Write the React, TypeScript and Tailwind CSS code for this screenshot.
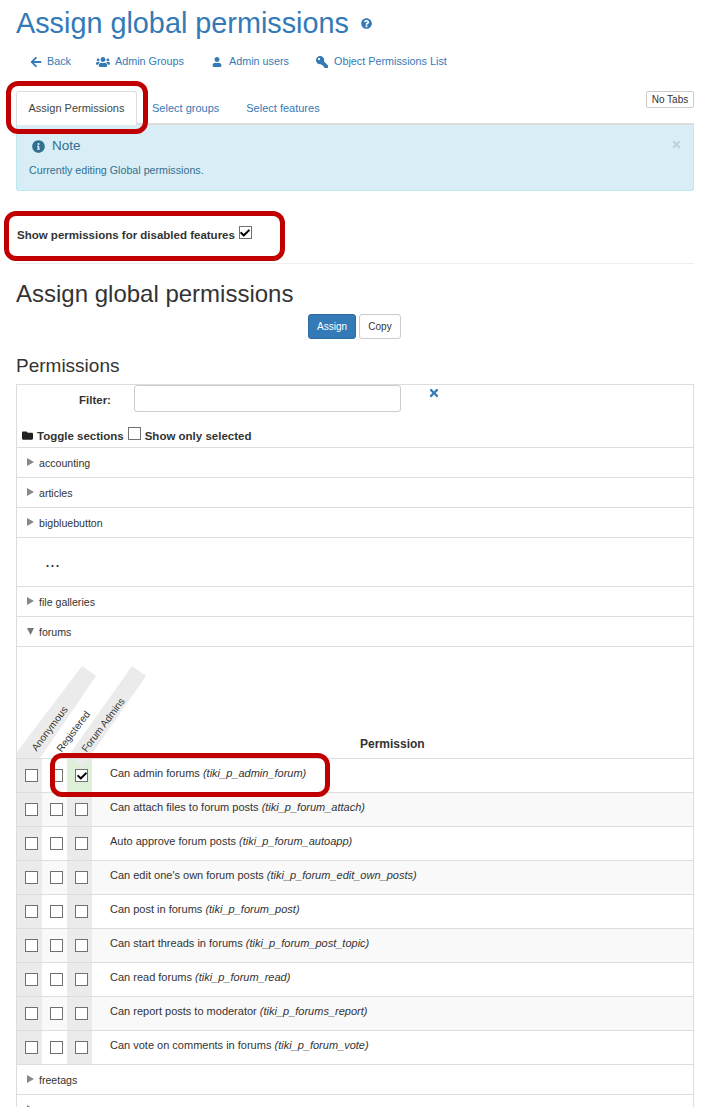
import React from 'react';
import { FaArrowLeft, FaCheck, FaFolder, FaInfoCircle, FaKey, FaQuestionCircle, FaTimes, FaUser, FaUsers } from 'react-icons/fa';

const forumPerms = [
  ['Can attach files to forum posts', 'tiki_p_forum_attach'],
  ['Auto approve forum posts', 'tiki_p_forum_autoapp'],
  ["Can edit one's own forum posts", 'tiki_p_forum_edit_own_posts'],
  ['Can post in forums', 'tiki_p_forum_post'],
  ['Can start threads in forums', 'tiki_p_forum_post_topic'],
  ['Can read forums', 'tiki_p_forum_read'],
  ['Can report posts to moderator', 'tiki_p_forums_report'],
  ['Can vote on comments in forums', 'tiki_p_forum_vote'],
];

function Box({ checked }: { checked?: boolean }) {
  return (
    <span className="flex h-[13px] w-[13px] shrink-0 items-center justify-center border border-[#707070] bg-white">
      {checked && <FaCheck className="text-[10px] text-black" />}
    </span>
  );
}

function Section({ name, open }: { name: string; open?: boolean }) {
  return (
    <div className="flex h-[30px] items-center border-b border-[#ddd] pl-[10px] pt-[2px]">
      <svg width="7" height="8" viewBox="0 0 7 8" className="mb-[3px] mr-[5px]">
        {open ? <path d="M0 1h7L3.5 8z" fill="#777" /> : <path d="M0 0l7 4-7 4z" fill="#888" />}
      </svg>
      <span className="text-[10.6px] text-[#333]">{name}</span>
    </div>
  );
}

function PermRow({ label, code, striped, first }: { label: string; code: string; striped?: boolean; first?: boolean }) {
  return (
    <div className={`flex h-[34px] border-b border-[#ddd] ${striped ? 'bg-[#f9f9f9]' : 'bg-white'}`}>
      <div className="flex w-[25px] items-center justify-center bg-[#ebebeb] pl-[4px]"><Box /></div>
      <div className="flex w-[25px] items-center justify-center pl-[4px]"><Box /></div>
      <div className={`relative flex w-[25px] items-center justify-center pl-[4px] ${first ? 'bg-[#dff0d8]' : 'bg-[#ebebeb]'}`}>
        {first && (
          <svg width="25" height="9" viewBox="0 0 25 9" className="absolute left-0 top-0">
            <path d="M7 0h18l-10 9z" fill="#ebebeb" />
          </svg>
        )}
        <span className="relative"><Box checked={first} /></span>
      </div>
      <div className="pl-[18px] pt-[7px] text-[11px] leading-[14px] text-[#333]">
        {label} <em>({code})</em>
      </div>
    </div>
  );
}

function NavLink({ icon, text, className }: { icon: React.ReactNode; text: string; className: string }) {
  return (
    <span className={`flex items-center text-[10.8px] text-[#337ab7] ${className}`}>
      {icon}
      <span>{text}</span>
    </span>
  );
}

export default function App() {
  return (
    <div className="relative h-[1120px] w-[706px] overflow-hidden bg-white font-['Liberation_Sans',Arial,sans-serif] text-[#333]">
      <div className="flex h-[47px] items-center pb-[1px] pl-[16px]">
        <h1 className="text-[28.8px] leading-[33px] text-[#337ab7]">Assign global permissions</h1>
        <FaQuestionCircle className="ml-[12px] text-[11px] text-[#337ab7]" />
      </div>

      <div className="flex h-[28px] items-center pl-[30px] pt-[1px]">
        <NavLink className="w-[66px]" icon={<FaArrowLeft className="mr-[5px] text-[12px]" />} text="Back" />
        <NavLink className="w-[116px]" icon={<FaUsers className="mr-[5px] text-[14px]" />} text="Admin Groups" />
        <NavLink className="w-[104px]" icon={<FaUser className="mr-[7px] text-[10px]" />} text="Admin users" />
        <NavLink className="" icon={<FaKey className="mr-[6px] -scale-x-100 text-[12px]" />} text="Object Permissions List" />
      </div>

      <div className="ml-[16px] mt-[16px] flex h-[34px] w-[678px] items-end border-b-2 border-[#ddd]">
        <div className="-mb-[2px] flex h-[34px] w-[121px] items-center justify-center rounded-t-[3px] border border-b-0 border-[#ddd] bg-white text-[11px] text-[#444]">
          Assign Permissions
        </div>
        <div className="ml-[15px] flex h-[32px] items-center pt-[2px] text-[11px] text-[#337ab7]">Select groups</div>
        <div className="ml-[27px] flex h-[32px] items-center pt-[2px] text-[11px] text-[#337ab7]">Select features</div>
        <div className="mb-[15px] ml-auto flex h-[17px] w-[48px] items-center justify-center rounded-[2px] border border-[#ccc] text-[10px] text-[#333]">
          No Tabs
        </div>
      </div>

      <div className="relative ml-[16px] h-[66px] w-[678px] rounded-b-[3px] border border-t-0 border-[#bce8f1] bg-[#d9edf7] text-[#31708f]">
        <div className="flex items-center pl-[15px] pt-[13px]">
          <FaInfoCircle className="mr-[7px] text-[13px]" />
          <span className="text-[13.5px] leading-[16px]">Note</span>
        </div>
        <div className="pl-[12px] pt-[9px] text-[10.7px] leading-[14px]">Currently editing Global permissions.</div>
        <FaTimes className="absolute right-[11px] top-[14px] text-[11px] text-[#b5d3e0]" />
      </div>

      <div className="ml-[17px] mt-[33px] flex h-[22px] items-center">
        <span className="pt-[2px] text-[11.5px] font-bold">Show permissions for disabled features</span>
        <span className="mb-[5px] ml-[4px]"><Box checked /></span>
      </div>
      <div className="ml-[16px] mt-[17px] w-[678px] border-t border-[#eee]" />

      <h2 className="ml-[16px] mt-[17px] text-[24px] leading-[26px]">Assign global permissions</h2>

      <div className="ml-[308px] mt-[7px] flex gap-[3px]">
        <div className="flex h-[25px] w-[48px] items-center justify-center rounded-[3px] border border-[#2e6da4] bg-[#337ab7] text-[10px] text-white">Assign</div>
        <div className="flex h-[25px] w-[42px] items-center justify-center rounded-[3px] border border-[#ccc] bg-white text-[10px] text-[#333]">Copy</div>
      </div>

      <h3 className="ml-[16px] mt-[16px] text-[19px] leading-[22px]">Permissions</h3>

      <div className="ml-[16px] mt-[7px] h-[723px] w-[678px] overflow-hidden border-x border-t border-[#ddd]">
        <div className="h-[63px] border-b border-[#ddd]">
          <div className="flex items-start">
            <span className="ml-[62px] mt-[7px] text-[11.5px] font-bold">Filter:</span>
            <span className="ml-[23px] h-[27px] w-[267px] rounded-[3px] border border-[#ccc] bg-white" />
            <FaTimes className="ml-[27px] mt-[2px] text-[12px] text-[#337ab7]" />
          </div>
          <div className="mt-[15px] flex items-center pl-[5px] text-[11.5px] font-bold leading-[14px]">
            <FaFolder className="mr-[4px] text-[11px] text-[#222]" />
            <span>Toggle sections</span>
            <span className="mb-[4px] ml-[4px] mr-[4px]"><Box /></span>
            <span>Show only selected</span>
          </div>
        </div>

        <Section name="accounting" />
        <Section name="articles" />
        <Section name="bigbluebutton" />
        <div className="flex h-[49px] items-center border-b border-[#ddd] pb-[2px] pl-[28px] text-[18px] leading-none text-[#333]">...</div>
        <Section name="file galleries" />
        <Section name="forums" open />

        <div className="relative h-[112px] border-b border-[#ddd]">
          <svg width="130" height="111" viewBox="0 0 130 111" className="absolute left-0 top-0">
            <path d="M0 111V105L65 19l14 10L23 111z" fill="#ebebeb" />
            <path d="M50 111L115 19l14 10L72 111z" fill="#ebebeb" />
          </svg>
          <span className="absolute left-[17px] top-[97px] origin-left -rotate-[53deg] whitespace-nowrap text-[10px] leading-[12px]">Anonymous</span>
          <span className="absolute left-[42px] top-[98px] origin-left -rotate-[53deg] whitespace-nowrap text-[10px] leading-[12px]">Registered</span>
          <span className="absolute left-[67px] top-[98px] origin-left -rotate-[53deg] whitespace-nowrap text-[10px] leading-[12px]">Forum Admins</span>
          <span className="absolute bottom-[7px] left-[343px] text-[12px] font-bold leading-[14px]">Permission</span>
        </div>

        <PermRow first label="Can admin forums" code="tiki_p_admin_forum" />
        {forumPerms.map(([label, code], i) => (
          <PermRow key={code} label={label} code={code} striped={i % 2 === 0} />
        ))}
        <Section name="freetags" />
        <Section name="" />
      </div>

      {/* red callouts drawn over the screenshot */}
      <div className="absolute left-[6px] top-[81px] h-[53px] w-[142px] rounded-[12px] border-[5px] border-[#c00000]" />
      <div className="absolute left-[4px] top-[211px] h-[50px] w-[281px] rounded-[12px] border-[5px] border-[#c00000]" />
      <div className="absolute left-[50px] top-[753px] h-[44px] w-[280px] rounded-[12px] border-[5px] border-[#c00000]" />
    </div>
  );
}
